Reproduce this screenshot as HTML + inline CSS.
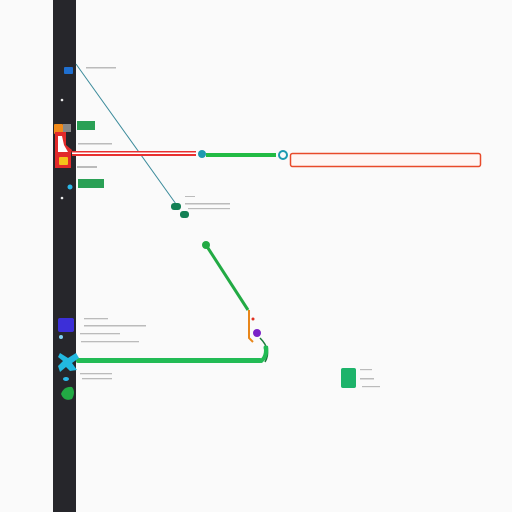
<!DOCTYPE html>
<html><head><style>
html,body{margin:0;padding:0;background:#fafafa;width:512px;height:512px;overflow:hidden}
</style></head><body>
<svg width="512" height="512" viewBox="0 0 512 512" xmlns="http://www.w3.org/2000/svg" font-family="Liberation Sans, sans-serif">
<rect width="512" height="512" fill="#fafafa"/>
<rect x="53" y="0" width="23" height="512" fill="#26262b"/>
<rect x="64" y="67" width="9" height="7" rx="1" fill="#1f6fd0"/>
<circle cx="62" cy="100" r="1.3" fill="#eee"/>
<circle cx="62" cy="198" r="1.3" fill="#eee"/>
<line x1="76" y1="64" x2="176" y2="204" stroke="#3a8a9a" stroke-width="1"/>
<g fill="#bbb">
<rect x="86" y="67" width="30" height="1.5"/>
<rect x="78" y="143" width="34" height="1.5"/>
<rect x="77" y="166" width="20" height="2"/>
<rect x="185" y="196" width="10" height="1"/>
<rect x="185" y="203" width="45" height="1.5"/>
<rect x="188" y="208" width="42" height="1.2"/>
<rect x="84" y="318" width="24" height="1.3"/>
<rect x="84" y="325" width="62" height="1.5"/>
<rect x="80" y="333" width="40" height="1.3"/>
<rect x="81" y="341" width="58" height="1.3"/>
<rect x="80" y="373" width="32" height="1.3"/>
<rect x="82" y="378" width="30" height="1.3"/>
<rect x="360" y="369" width="12" height="1.2"/>
<rect x="360" y="378" width="14" height="1.5"/>
<rect x="362" y="386" width="18" height="1.2"/>
</g>
<rect x="54" y="124" width="9" height="10" rx="1" fill="#f08a1a"/>
<rect x="63" y="124" width="8" height="8" fill="#888"/>
<rect x="77" y="121" width="18" height="9" fill="#2aa055"/>
<path d="M55 132 L55 156 L70 157 L72 150 L66 145 L66 132 Z" fill="#e22a2a"/>
<path d="M58 136 L58 152 L68 152 L64 145 L62 136 Z" fill="#fff"/>
<rect x="72" y="151" width="124" height="5" fill="#e83030"/>
<rect x="72" y="152.5" width="124" height="1.5" fill="#fff"/>
<rect x="55" y="154" width="16" height="14" fill="#e22a2a"/>
<rect x="59" y="157" width="9" height="8" rx="1" fill="#f4c21a"/>
<rect x="78" y="179" width="26" height="9" fill="#2aa055"/>
<circle cx="70" cy="187" r="2.5" fill="#2ab8e8"/>
<circle cx="202" cy="154" r="4" fill="#1c9ab0"/>
<rect x="206" y="153" width="70" height="4" fill="#22bb44"/>
<circle cx="283" cy="155" r="4" fill="none" stroke="#1c9ab0" stroke-width="2"/>
<rect x="290.5" y="153.5" width="190" height="13" rx="2" fill="#fff6f4" stroke="#e84a2a" stroke-width="1.5"/>
<rect x="171" y="203" width="10" height="7" rx="3" fill="#138055"/>
<rect x="180" y="211" width="9" height="7" rx="3" fill="#138055"/>
<circle cx="206" cy="245" r="4" fill="#22aa44"/>
<line x1="206" y1="245" x2="248" y2="310" stroke="#22aa44" stroke-width="3"/>
<path d="M249 310 L249 338 L253 342" fill="none" stroke="#e8861a" stroke-width="2"/>
<circle cx="253" cy="319" r="1.5" fill="#e03020"/>
<circle cx="257" cy="333" r="4" fill="#7a22c8"/>
<path d="M260 338 Q272 350 265 362" fill="none" stroke="#1a7a3a" stroke-width="1.5"/>
<rect x="76" y="358" width="186" height="5" rx="2" fill="#22bb55"/>
<path d="M254 362 Q264 360 264 350 Q262 344 268 346 Q270 356 262 363 Z" fill="#22bb55"/>
<rect x="58" y="318" width="16" height="14" rx="2" fill="#3c2fd8"/>
<circle cx="61" cy="337" r="2" fill="#7fd0f0"/>
<path d="M60 353 L68 358 L76 353 L79 358 L72 363 L77 370 L70 371 L66 367 L60 372 L58 366 L63 361 L58 357 Z" fill="#22b8e0"/>
<ellipse cx="66" cy="379" rx="3" ry="2" fill="#2ab8e8"/>
<path d="M61 394 Q64 386 72 387 Q76 392 72 399 Q64 402 61 394 Z" fill="#22aa44"/>
<rect x="341" y="368" width="15" height="20" rx="2" fill="#1db36a"/>
</svg>
</body></html>
